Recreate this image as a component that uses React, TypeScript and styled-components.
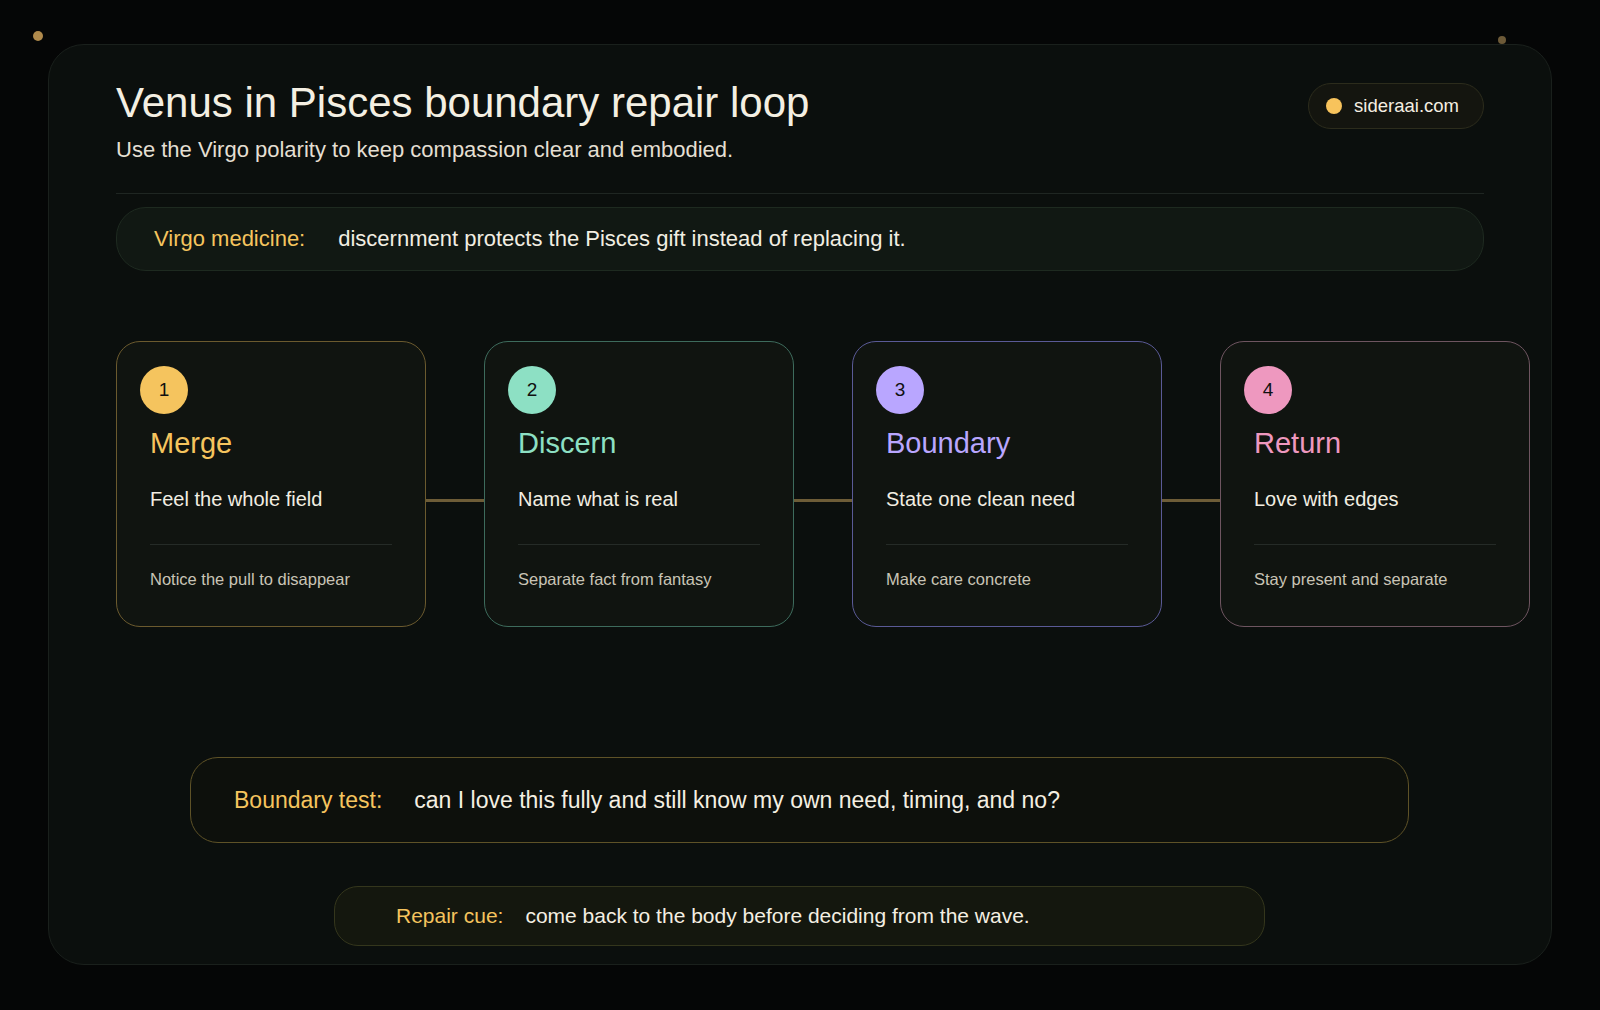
import React from "react";
import styled, { createGlobalStyle } from "styled-components";

const Global = createGlobalStyle`
  html, body { margin: 0; padding: 0; background: #050606; }
  body { width: 1600px; height: 1010px; overflow: hidden; font-family: "Liberation Sans", Arial, sans-serif; }
`;

const Page = styled.div`
  position: relative;
  width: 1600px;
  height: 1010px;
  padding: 44px 48px 45px 48px;
  box-sizing: border-box;
  background: #050606;
`;

const Dot = styled.div<{ $x: number; $y: number; $s: number; $c: string }>`
  position: absolute;
  left: ${(p) => p.$x}px;
  top: ${(p) => p.$y}px;
  width: ${(p) => p.$s}px;
  height: ${(p) => p.$s}px;
  border-radius: 50%;
  background: ${(p) => p.$c};
`;

const Panel = styled.div`
  height: 100%;
  box-sizing: border-box;
  background: #0b0f0d;
  border: 1px solid #1a201c;
  border-radius: 36px;
  padding: 32px 67px 0 67px;
  display: flex;
  flex-direction: column;
`;

const Header = styled.div`
  display: flex;
  justify-content: space-between;
  align-items: flex-start;
  padding-bottom: 30px;
  border-bottom: 1px solid #1f2622;
`;

const Title = styled.h1`
  margin: 0;
  font-weight: 400;
  font-size: 42px;
  line-height: 52px;
  color: #f4efe2;
`;

const Sub = styled.p`
  margin: 8px 0 0;
  font-size: 22px;
  line-height: 26px;
  color: #e4dfd2;
`;

const Pill = styled.div`
  margin-top: 6px;
  display: flex;
  align-items: center;
  gap: 12px;
  height: 46px;
  box-sizing: border-box;
  padding: 0 24px 0 17px;
  border-radius: 23px;
  border: 1px solid #2c2c1c;
  background: #14150f;
  color: #f4efe2;
  font-size: 18.5px;
`;

const PillDot = styled.span`
  width: 16px;
  height: 16px;
  border-radius: 50%;
  background: #f7c35c;
`;

const Medicine = styled.div`
  margin-top: 13px;
  height: 64px;
  box-sizing: border-box;
  border-radius: 30px;
  border: 1px solid #1e2a20;
  background: #111813;
  display: flex;
  align-items: center;
  padding-left: 37px;
  font-size: 22px;
  color: #f2eee2;
`;

const Label = styled.span<{ $gap: number }>`
  color: #f5c45e;
  margin-right: ${(p) => p.$gap}px;
`;

const Flow = styled.div`
  margin-top: 70px;
  display: flex;
  align-items: flex-start;
  width: 1436px;
`;

const Connector = styled.div`
  width: 58px;
  height: 3px;
  margin-top: 158px;
  background: #6d5c37;
  flex: none;
`;

const Card = styled.div<{ $c: string }>`
  width: 310px;
  height: 286px;
  flex: none;
  box-sizing: border-box;
  border: 1px solid ${(p) => p.$c};
  border-radius: 24px;
  background: #101410;
  padding: 24px 33px 0 33px;
  display: flex;
  flex-direction: column;
`;

const Num = styled.div<{ $c: string }>`
  width: 48px;
  height: 48px;
  margin-left: -10px;
  border-radius: 50%;
  background: ${(p) => p.$c};
  color: #101010;
  font-size: 19px;
  display: flex;
  align-items: center;
  justify-content: center;
`;

const CardTitle = styled.div<{ $c: string }>`
  margin-top: 12px;
  font-size: 29px;
  line-height: 34px;
  color: ${(p) => p.$c};
`;

const CardSub = styled.div`
  margin-top: 27px;
  font-size: 20px;
  line-height: 24px;
  color: #f2eee2;
  padding-bottom: 33px;
  border-bottom: 1px solid #252b27;
`;

const CardNote = styled.div`
  margin-top: 23px;
  font-size: 16.5px;
  line-height: 23px;
  color: #c9c4b6;
  max-width: 208px;
`;

const Test = styled.div`
  margin: 130px 75px 0 74px;
  height: 86px;
  box-sizing: border-box;
  border-radius: 28px;
  border: 1px solid #5e5227;
  background: #0d100c;
  display: flex;
  align-items: center;
  padding-left: 43px;
  font-size: 23px;
  color: #f4efe2;
`;

const Repair = styled.div`
  margin: 43px 219px 0 218px;
  height: 60px;
  box-sizing: border-box;
  border-radius: 24px;
  border: 1px solid #34361c;
  background: #14170e;
  display: flex;
  align-items: center;
  padding-left: 61px;
  font-size: 21px;
  color: #f4efe2;
`;

const steps = [
  { n: 1, t: "Merge", s: "Feel the whole field", note: "Notice the pull to disappear", c: "#f5c45e", b: "#6b5a2e" },
  { n: 2, t: "Discern", s: "Name what is real", note: "Separate fact from fantasy", c: "#8de0c4", b: "#3d6b5c" },
  { n: 3, t: "Boundary", s: "State one clean need", note: "Make care concrete", c: "#b9a6ff", b: "#5a5a96" },
  { n: 4, t: "Return", s: "Love with edges", note: "Stay present and separate", c: "#ee98bf", b: "#6e5560" },
];

export default function App() {
  return (
    <Page>
      <Global />
      <Dot $x={33} $y={31} $s={10} $c="#b08a4c" />
      <Dot $x={1498} $y={36} $s={8} $c="#6d5a38" />
      <Panel>
        <Header>
          <div>
            <Title>Venus in Pisces boundary repair loop</Title>
            <Sub>Use the Virgo polarity to keep compassion clear and embodied.</Sub>
          </div>
          <Pill>
            <PillDot />
            sideraai.com
          </Pill>
        </Header>
        <Medicine>
          <Label $gap={33}>Virgo medicine:</Label>
          discernment protects the Pisces gift instead of replacing it.
        </Medicine>
        <Flow>
          {steps.map((s, i) => (
            <React.Fragment key={s.n}>
              {i > 0 && <Connector />}
              <Card $c={s.b}>
                <Num $c={s.c}>{s.n}</Num>
                <CardTitle $c={s.c}>{s.t}</CardTitle>
                <CardSub>{s.s}</CardSub>
                <CardNote>{s.note}</CardNote>
              </Card>
            </React.Fragment>
          ))}
        </Flow>
        <Test>
          <Label $gap={32}>Boundary test:</Label>
          can I love this fully and still know my own need, timing, and no?
        </Test>
        <Repair>
          <Label $gap={22}>Repair cue:</Label>
          come back to the body before deciding from the wave.
        </Repair>
      </Panel>
    </Page>
  );
}
